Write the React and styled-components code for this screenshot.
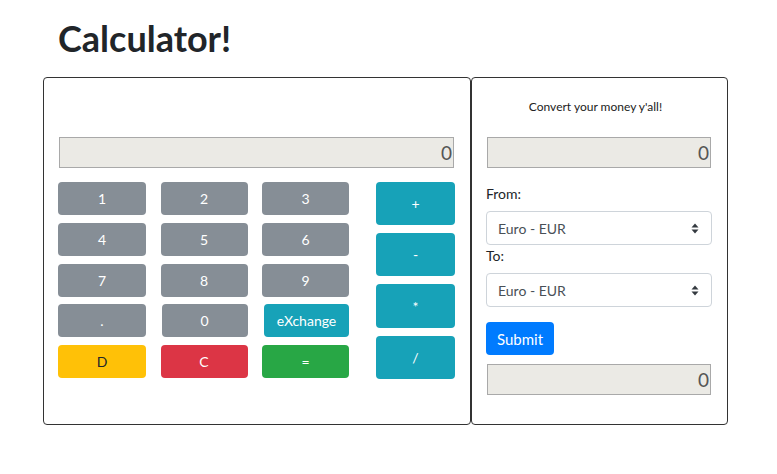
import React from 'react';
import styled, { createGlobalStyle } from 'styled-components';

const GlobalStyle = createGlobalStyle`
  body {
    margin: 0;
    background: #fff;
    font-family: Lato, "Noto Sans", sans-serif;
    color: #212529;
  }
`;

const Page = styled.div`
  padding: 12px 0 0 43px;
`;

const Title = styled.h1`
  margin: 0 0 13px 15px;
  font-size: 36px;
  font-weight: 700;
  line-height: 52px;
  color: #212529;
`;

const Cards = styled.div`
  display: flex;
  align-items: stretch;
`;

const Card = styled.div`
  box-sizing: border-box;
  width: ${(p) => p.width}px;
  height: 348px;
  border: 1px solid #333;
  border-radius: 4px;
  padding: ${(p) => p.pad};
`;

const Display = styled.div`
  box-sizing: border-box;
  height: 31px;
  width: ${(p) => p.width}px;
  margin-left: 1px;
  background: #ebeae5;
  border: 1px solid #a9a9a9;
  text-align: right;
  font-size: 19px;
  line-height: 29px;
  color: #555;
  padding-right: 1px;
  font-weight: 400;
`;

const Keys = styled.div`
  display: flex;
  margin-top: 14px;
  gap: 27px;
`;

const Digits = styled.div`
  display: grid;
  grid-template-columns: 88px 87px 87px;
  grid-auto-rows: 33px;
  column-gap: 14.5px;
  row-gap: 7.75px;
`;

const Ops = styled.div`
  display: flex;
  flex-direction: column;
  gap: 8px;
  width: 79px;
`;

const colors = {
  gray: ['#868e96', '#fff'],
  info: ['#17a2b8', '#fff'],
  warn: ['#ffc107', '#212529'],
  danger: ['#dc3545', '#fff'],
  success: ['#28a745', '#fff'],
  primary: ['#007bff', '#fff'],
};

const Key = styled.button`
  border: none;
  border-radius: 4px;
  background: ${(p) => colors[p.tone || 'gray'][0]};
  color: ${(p) => colors[p.tone || 'gray'][1]};
  font-family: Lato, "Noto Sans", sans-serif;
  font-size: 14px;
  height: ${(p) => p.h || 33}px;
  padding: 0;
  margin-left: ${(p) => p.shift || 0}px;
  cursor: pointer;
`;

const Caption = styled.div`
  text-align: center;
  font-size: 12px;
  color: #222;
  margin: 21px 0 23px -8px;
`;

const Label = styled.div`
  font-size: 14px;
  margin: ${(p) => p.m};
  line-height: 18px;
`;

const Select = styled.div`
  box-sizing: border-box;
  height: 34px;
  width: 226px;
  border: 1px solid #ced4da;
  border-radius: 4px;
  display: flex;
  align-items: center;
  justify-content: space-between;
  padding: 0 12px 0 11px;
  font-size: 14px;
  color: #495057;
`;

const Submit = styled(Key)`
  width: 68px;
  margin-top: 15px;
  font-size: 15px;
`;

const Arrows = () => (
  <svg width="8" height="11" viewBox="0 0 8 11">
    <path d="M4 0.5 L7.5 4.5 H0.5 Z M4 10.5 L7.5 6.5 H0.5 Z" fill="#343a40" />
  </svg>
);

export default function App() {
  const digits = ['1', '2', '3', '4', '5', '6', '7', '8', '9'];
  return (
    <>
      <GlobalStyle />
      <Page>
        <Title>Calculator!</Title>
        <Cards>
          <Card width={428} pad="59px 15px 0 14px">
            <Display width={395}>0</Display>
            <Keys>
              <Digits>
                {digits.map((d) => (
                  <Key key={d}>{d}</Key>
                ))}
                <Key>.</Key>
                <Key shift={1}>0</Key>
                <Key tone="info" shift={2}>eXchange</Key>
                <Key tone="warn">D</Key>
                <Key tone="danger">C</Key>
                <Key tone="success">=</Key>
              </Digits>
              <Ops>
                <Key tone="info" h={43}>+</Key>
                <Key tone="info" h={43}>-</Key>
                <Key tone="info" h={44}>*</Key>
                <Key tone="info" h={43}>/</Key>
              </Ops>
            </Keys>
          </Card>
          <Card width={257} pad="0 14px 0 14px">
            <Caption>Convert your money y'all!</Caption>
            <Display width={224}>0</Display>
            <Label m="17px 0 8px 0">From:</Label>
            <Select>
              Euro - EUR
              <Arrows />
            </Select>
            <Label m="2px 0 8px 0">To:</Label>
            <Select>
              Euro - EUR
              <Arrows />
            </Select>
            <Submit tone="primary">Submit</Submit>
            <Display width={224} style={{ marginTop: 9 }}>0</Display>
          </Card>
        </Cards>
      </Page>
    </>
  );
}
